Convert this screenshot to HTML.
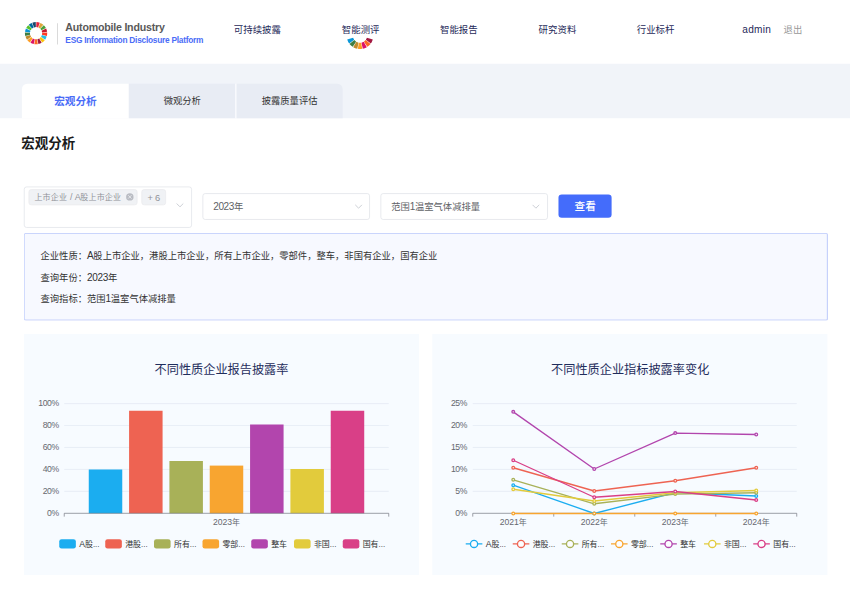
<!DOCTYPE html>
<html lang="zh-CN"><head><meta charset="utf-8"><title>宏观分析</title>
<style>
html,body{margin:0;padding:0;background:#fff;overflow:hidden;width:850px;height:608px}
#stage{position:absolute;left:0;top:0;width:1280px;height:915.58px;transform:scale(0.6640625);transform-origin:0 0;font-family:"Liberation Sans","Noto Sans CJK SC",sans-serif;color:#333;overflow:hidden;background:#fff}
.abs{position:absolute}
.hdr{left:0;top:0;width:1280px;height:96px;background:#fff}
.band{left:0;top:96px;width:1280px;height:81.8px;background:#f1f4f9}
.t1{font-weight:bold;font-size:16px;color:#595959;letter-spacing:-0.32px;white-space:nowrap;line-height:20px}
.t2{font-weight:bold;font-size:12.5px;color:#4a6cf7;letter-spacing:-0.36px;white-space:nowrap;line-height:16px}
.nav{font-size:14.2px;color:#1f2a5a;white-space:nowrap;line-height:20px;top:35.2px}
.tab{top:126.3px;height:51.5px;width:160.4px;background:#e8ecf4;line-height:53px;text-align:center;font-size:14px;color:#333}
.tab.on{background:#fff;color:#4a6cf7;font-weight:bold;font-size:16px;border-radius:8px 0 0 0}
.h1{left:32px;top:200.5px;font-size:20.3px;font-weight:bold;color:#1a1a1a;line-height:30px}
.sel{box-sizing:border-box;border:1px solid #dcdfe6;border-radius:4px;background:#fff;font-size:14px;color:#606266;line-height:38px}
.tag{box-sizing:border-box;height:24px;background:#f0f2f5;border:1px solid #e9e9eb;border-radius:4px;color:#909399;font-size:12px;line-height:22px;white-space:nowrap}
.btn{background:#446cfb;color:#fff;border-radius:5px;font-size:16px;text-align:center;line-height:36.4px;font-weight:500}
.info{box-sizing:border-box;left:35.5px;top:351.2px;width:1211.1px;height:132.2px;border:1px solid #b4c4fb;border-right:2px solid #c6d1fb;border-bottom:2px solid #c6d1fb;background:#f7f9ff;border-radius:3px;font-size:14px;color:#333;line-height:32.5px;padding:17.2px 0 0 24.5px}
.panel{background:#f7fbff;top:502.6px;height:363.3px}
svg text{font-family:"Liberation Sans","Noto Sans CJK SC",sans-serif}
.ax{font-size:12px;fill:#666870}
.ax.d{font-size:13px;letter-spacing:-0.6px}
.ax .d{font-size:13px;letter-spacing:0}
.d{font-size:1.08em;letter-spacing:-0.035em}
.lg{font-size:12px;fill:#333}
.ttl{font-size:18.35px;fill:#1f2d5c}
</style></head><body>
<div id="stage">
<div class="abs hdr"></div>
<svg class="abs" style="left:0;top:0" width="120" height="96" viewBox="0 0 120 96"><path d="M54.77 33.21A16.80 16.80 0 0 1 59.93 34.17L57.38 41.33A9.20 9.20 0 0 0 54.56 40.80Z" fill="#E5243B"/><path d="M60.80 34.51A16.80 16.80 0 0 1 65.27 37.27L60.31 43.03A9.20 9.20 0 0 0 57.86 41.52Z" fill="#DDA63A"/><path d="M65.96 37.91A16.80 16.80 0 0 1 69.12 42.09L62.42 45.67A9.20 9.20 0 0 0 60.69 43.38Z" fill="#4C9F38"/><path d="M69.54 42.93A16.80 16.80 0 0 1 70.98 47.98L63.43 48.90A9.20 9.20 0 0 0 62.65 46.13Z" fill="#C5192D"/><path d="M71.07 48.92A16.80 16.80 0 0 1 70.58 54.14L63.22 52.27A9.20 9.20 0 0 0 63.48 49.41Z" fill="#FF3A21"/><path d="M70.32 55.05A16.80 16.80 0 0 1 67.98 59.75L61.79 55.34A9.20 9.20 0 0 0 63.08 52.76Z" fill="#26BDE2"/><path d="M67.42 60.49A16.80 16.80 0 0 1 63.54 64.03L59.36 57.68A9.20 9.20 0 0 0 61.48 55.75Z" fill="#FCC30B"/><path d="M62.74 64.53A16.80 16.80 0 0 1 57.85 66.42L56.24 58.99A9.20 9.20 0 0 0 58.92 57.95Z" fill="#A21942"/><path d="M56.92 66.59A16.80 16.80 0 0 1 51.68 66.59L52.86 59.09A9.20 9.20 0 0 0 55.74 59.09Z" fill="#FD6925"/><path d="M50.75 66.42A16.80 16.80 0 0 1 45.86 64.53L49.68 57.95A9.20 9.20 0 0 0 52.36 58.99Z" fill="#DD1367"/><path d="M45.06 64.03A16.80 16.80 0 0 1 41.18 60.49L47.12 55.75A9.20 9.20 0 0 0 49.24 57.68Z" fill="#FD9D24"/><path d="M40.62 59.75A16.80 16.80 0 0 1 38.28 55.05L45.52 52.76A9.20 9.20 0 0 0 46.81 55.34Z" fill="#BF8B2E"/><path d="M38.02 54.14A16.80 16.80 0 0 1 37.53 48.92L45.12 49.41A9.20 9.20 0 0 0 45.38 52.27Z" fill="#3F7E44"/><path d="M37.62 47.98A16.80 16.80 0 0 1 39.06 42.93L45.95 46.13A9.20 9.20 0 0 0 45.17 48.90Z" fill="#0A97D9"/><path d="M39.48 42.09A16.80 16.80 0 0 1 42.64 37.91L47.91 43.38A9.20 9.20 0 0 0 46.18 45.67Z" fill="#56C02B"/><path d="M43.33 37.27A16.80 16.80 0 0 1 47.80 34.51L50.74 41.52A9.20 9.20 0 0 0 48.29 43.03Z" fill="#00689D"/><path d="M48.67 34.17A16.80 16.80 0 0 1 53.83 33.21L54.04 40.80A9.20 9.20 0 0 0 51.22 41.33Z" fill="#19486A"/></svg>
<div class="abs" style="left:86px;top:34.5px;width:1px;height:32.5px;background:#c8c8c8"></div>
<div class="abs t1" style="left:98.4px;top:31.7px">Automobile Industry</div>
<div class="abs t2" style="left:98.4px;top:51.5px">ESG Information Disclosure Platform</div>
<div class="abs nav" style="left:352.1px">可持续披露</div>
<div class="abs nav" style="left:514.7px">智能测评</div>
<svg class="abs" style="left:500px;top:40px" width="90" height="50" viewBox="500 40 90 50"><path d="M525.78 65.45A20.18 20.18 0 0 1 522.85 59.59L531.76 56.82A10.84 10.84 0 0 0 533.34 59.97Z" fill="#0A97D9"/><path d="M531.16 70.55A20.18 20.18 0 0 1 526.31 66.15L533.62 60.35A10.84 10.84 0 0 0 536.23 62.71Z" fill="#3F7E44"/><path d="M538.02 73.37A20.18 20.18 0 0 1 531.91 71.01L536.63 62.96A10.84 10.84 0 0 0 539.92 64.23Z" fill="#BF8B2E"/><path d="M545.43 73.51A20.18 20.18 0 0 1 538.88 73.53L540.38 64.31A10.84 10.84 0 0 0 543.90 64.30Z" fill="#FD9D24"/><path d="M552.40 70.97A20.18 20.18 0 0 1 546.30 73.35L544.36 64.22A10.84 10.84 0 0 0 547.64 62.94Z" fill="#DD1367"/><path d="M557.98 66.09A20.18 20.18 0 0 1 553.15 70.51L548.04 62.69A10.84 10.84 0 0 0 550.64 60.31Z" fill="#FD6925"/><path d="M561.41 59.51A20.18 20.18 0 0 1 558.51 65.38L550.92 59.94A10.84 10.84 0 0 0 552.49 56.78Z" fill="#A21942"/></svg>
<div class="abs nav" style="left:662.6px">智能报告</div>
<div class="abs nav" style="left:811.1px">研究资料</div>
<div class="abs nav" style="left:958.9px">行业标杆</div>
<div class="abs nav" style="left:1117.8px;letter-spacing:0.4px;font-size:15.2px">admin</div>
<div class="abs nav" style="left:1180.0px;color:#999;font-size:14px">退出</div>

<div class="abs band"></div>
<div class="abs tab on" style="left:32.8px;width:161.5px">宏观分析</div>
<div class="abs tab" style="left:194.3px">微观分析</div>
<div class="abs tab" style="left:355.9px;border-radius:0 8px 0 0">披露质量评估</div>
<div class="abs" style="left:354.1px;top:126.3px;width:1.5px;height:51.5px;background:#f9fafd"></div>
<div class="abs h1">宏观分析</div>

<div class="abs sel" style="left:35.5px;top:280.5px;width:253.6px;height:62px"></div>
<div class="abs tag" style="left:42.5px;top:285.2px;width:164.5px;padding-left:8.3px;letter-spacing:0.3px;word-spacing:0.6px">上市企业 <span class="d" style="font-size:13.5px">/ A</span>股上市企业</div>
<svg class="abs" style="left:188.5px;top:289.9px" width="13" height="13" viewBox="0 0 13 13"><circle cx="6.5" cy="6.5" r="5.6" fill="#b9bcc3"/><path d="M4.4 4.4l4.2 4.2M8.6 4.4l-4.2 4.2" stroke="#f0f2f5" stroke-width="1.2" stroke-linecap="round"/></svg>
<div class="abs tag" style="left:212.8px;top:285.2px;width:37.4px;text-align:center;font-size:14px;letter-spacing:-0.3px">+ 6</div>
<svg class="abs" style="left:263px;top:303.1px" width="16" height="12" viewBox="0 0 16 12"><path d="M3 3.5l5 5 5-5" fill="none" stroke="#c0c4cc" stroke-width="1.2"/></svg>

<div class="abs sel" style="left:305px;top:291px;width:252.3px;height:40px;padding-left:15px"><span class="d">2023</span>年</div>
<svg class="abs" style="left:531.8px;top:305px" width="16" height="12" viewBox="0 0 16 12"><path d="M3 3.5l5 5 5-5" fill="none" stroke="#c0c4cc" stroke-width="1.2"/></svg>
<div class="abs sel" style="left:573px;top:291px;width:251.8px;height:40px;padding-left:15px">范围<span class="d">1</span>温室气体减排量</div>
<svg class="abs" style="left:798.8px;top:305px" width="16" height="12" viewBox="0 0 16 12"><path d="M3 3.5l5 5 5-5" fill="none" stroke="#c0c4cc" stroke-width="1.2"/></svg>
<div class="abs btn" style="left:841px;top:292.9px;width:80.4px;height:35.1px">查看</div>

<div class="abs info">企业性质：<span class="d">A</span>股上市企业，港股上市企业，所有上市企业，零部件，整车，非国有企业，国有企业<br>查询年份：<span class="d">2023</span>年<br>查询指标：范围<span class="d">1</span>温室气体减排量</div>

<div class="abs panel" style="left:35.5px;width:595.1px"></div>
<div class="abs panel" style="left:651.3px;width:595.2px"></div>
<svg class="abs" style="left:0;top:0" width="1280" height="915.58" viewBox="0 0 1280 915.58">
<line x1="96.75" x2="585.41" y1="739.93" y2="739.93" stroke="#e0e6f1" stroke-width="1"/><line x1="96.75" x2="585.41" y1="706.89" y2="706.89" stroke="#e0e6f1" stroke-width="1"/><line x1="96.75" x2="585.41" y1="673.85" y2="673.85" stroke="#e0e6f1" stroke-width="1"/><line x1="96.75" x2="585.41" y1="640.81" y2="640.81" stroke="#e0e6f1" stroke-width="1"/><line x1="96.75" x2="585.41" y1="607.77" y2="607.77" stroke="#e0e6f1" stroke-width="1"/><text x="88.47" y="776.47" text-anchor="end" class="ax d">0%</text><text x="88.47" y="743.43" text-anchor="end" class="ax d">20%</text><text x="88.47" y="710.39" text-anchor="end" class="ax d">40%</text><text x="88.47" y="677.35" text-anchor="end" class="ax d">60%</text><text x="88.47" y="644.31" text-anchor="end" class="ax d">80%</text><text x="88.47" y="611.27" text-anchor="end" class="ax d">100%</text><rect x="133.65" y="707.01" width="50.45" height="65.96" fill="#1badf0"/><rect x="194.38" y="618.54" width="50.45" height="154.43" fill="#ee6352"/><rect x="255.11" y="694.21" width="50.45" height="78.76" fill="#a8b158"/><rect x="315.84" y="701.14" width="50.45" height="71.83" fill="#f8a530"/><rect x="376.58" y="639.25" width="50.45" height="133.72" fill="#b245ad"/><rect x="437.31" y="706.26" width="50.45" height="66.71" fill="#e2cb3c"/><rect x="498.04" y="618.54" width="50.45" height="154.43" fill="#d93f87"/><path d="M96.75 777.97V772.97H585.41V777.97" fill="none" stroke="#6e7079" stroke-width="1"/><text x="341.08" y="790.27" text-anchor="middle" class="ax"><tspan class="d">2023</tspan>年</text><rect x="89.22" y="812.05" width="25" height="14" rx="3.5" fill="#1badf0"/><text x="119.22" y="823.25" class="lg"><tspan font-size="13">A</tspan>股...</text><rect x="158.49" y="812.05" width="25" height="14" rx="3.5" fill="#ee6352"/><text x="188.49" y="823.25" class="lg">港股...</text><rect x="231.91" y="812.05" width="25" height="14" rx="3.5" fill="#a8b158"/><text x="261.91" y="823.25" class="lg">所有...</text><rect x="304.94" y="812.05" width="25" height="14" rx="3.5" fill="#f8a530"/><text x="334.94" y="823.25" class="lg">零部...</text><rect x="378.35" y="812.05" width="25" height="14" rx="3.5" fill="#b245ad"/><text x="408.35" y="823.25" class="lg">整车</text><rect x="442.73" y="812.05" width="25" height="14" rx="3.5" fill="#e2cb3c"/><text x="472.73" y="823.25" class="lg">非国...</text><rect x="516.14" y="812.05" width="25" height="14" rx="3.5" fill="#d93f87"/><text x="546.14" y="823.25" class="lg">国有...</text><text x="333.55" y="562.77" text-anchor="middle" class="ttl">不同性质企业报告披露率</text>
<line x1="711.91" x2="1199.81" y1="739.93" y2="739.93" stroke="#e0e6f1" stroke-width="1"/><line x1="711.91" x2="1199.81" y1="706.89" y2="706.89" stroke="#e0e6f1" stroke-width="1"/><line x1="711.91" x2="1199.81" y1="673.85" y2="673.85" stroke="#e0e6f1" stroke-width="1"/><line x1="711.91" x2="1199.81" y1="640.81" y2="640.81" stroke="#e0e6f1" stroke-width="1"/><line x1="711.91" x2="1199.81" y1="607.77" y2="607.77" stroke="#e0e6f1" stroke-width="1"/><text x="703.25" y="776.47" text-anchor="end" class="ax d">0%</text><text x="703.25" y="743.43" text-anchor="end" class="ax d">5%</text><text x="703.25" y="710.39" text-anchor="end" class="ax d">10%</text><text x="703.25" y="677.35" text-anchor="end" class="ax d">15%</text><text x="703.25" y="644.31" text-anchor="end" class="ax d">20%</text><text x="703.25" y="611.27" text-anchor="end" class="ax d">25%</text><path d="M711.91 772.97H1199.81M711.91 772.97v5M833.88 772.97v5M955.86 772.97v5M1077.84 772.97v5M1199.81 772.97v5" fill="none" stroke="#6e7079" stroke-width="1"/><text x="772.89" y="790.27" text-anchor="middle" class="ax"><tspan class="d">2021</tspan>年</text><text x="894.87" y="790.27" text-anchor="middle" class="ax"><tspan class="d">2022</tspan>年</text><text x="1016.85" y="790.27" text-anchor="middle" class="ax"><tspan class="d">2023</tspan>年</text><text x="1138.82" y="790.27" text-anchor="middle" class="ax"><tspan class="d">2024</tspan>年</text><polyline points="772.89,730.67 894.87,773.27 1016.85,741.65 1138.82,746.91" fill="none" stroke="#1badf0" stroke-width="2" stroke-linejoin="bevel"/><polyline points="772.89,704.38 894.87,739.39 1016.85,723.95 1138.82,704.38" fill="none" stroke="#ee6352" stroke-width="2" stroke-linejoin="bevel"/><polyline points="772.89,722.49 894.87,758.63 1016.85,743.98 1138.82,741.99" fill="none" stroke="#a8b158" stroke-width="2" stroke-linejoin="bevel"/><polyline points="772.89,773.27 894.87,773.27 1016.85,773.27 1138.82,773.27" fill="none" stroke="#f8a530" stroke-width="2" stroke-linejoin="bevel"/><polyline points="772.89,620.18 894.87,706.24 1016.85,652.13 1138.82,654.33" fill="none" stroke="#b245ad" stroke-width="2" stroke-linejoin="bevel"/><polyline points="772.89,736.73 894.87,754.43 1016.85,741.99 1138.82,738.66" fill="none" stroke="#e2cb3c" stroke-width="2" stroke-linejoin="bevel"/><polyline points="772.89,693.07 894.87,748.78 1016.85,740.12 1138.82,752.97" fill="none" stroke="#d93f87" stroke-width="2" stroke-linejoin="bevel"/><circle cx="772.89" cy="730.67" r="2" fill="#fff" stroke="#1badf0" stroke-width="2"/><circle cx="894.87" cy="773.27" r="2" fill="#fff" stroke="#1badf0" stroke-width="2"/><circle cx="1016.85" cy="741.65" r="2" fill="#fff" stroke="#1badf0" stroke-width="2"/><circle cx="1138.82" cy="746.91" r="2" fill="#fff" stroke="#1badf0" stroke-width="2"/><circle cx="772.89" cy="704.38" r="2" fill="#fff" stroke="#ee6352" stroke-width="2"/><circle cx="894.87" cy="739.39" r="2" fill="#fff" stroke="#ee6352" stroke-width="2"/><circle cx="1016.85" cy="723.95" r="2" fill="#fff" stroke="#ee6352" stroke-width="2"/><circle cx="1138.82" cy="704.38" r="2" fill="#fff" stroke="#ee6352" stroke-width="2"/><circle cx="772.89" cy="722.49" r="2" fill="#fff" stroke="#a8b158" stroke-width="2"/><circle cx="894.87" cy="758.63" r="2" fill="#fff" stroke="#a8b158" stroke-width="2"/><circle cx="1016.85" cy="743.98" r="2" fill="#fff" stroke="#a8b158" stroke-width="2"/><circle cx="1138.82" cy="741.99" r="2" fill="#fff" stroke="#a8b158" stroke-width="2"/><circle cx="772.89" cy="773.27" r="2" fill="#fff" stroke="#f8a530" stroke-width="2"/><circle cx="894.87" cy="773.27" r="2" fill="#fff" stroke="#f8a530" stroke-width="2"/><circle cx="1016.85" cy="773.27" r="2" fill="#fff" stroke="#f8a530" stroke-width="2"/><circle cx="1138.82" cy="773.27" r="2" fill="#fff" stroke="#f8a530" stroke-width="2"/><circle cx="772.89" cy="620.18" r="2" fill="#fff" stroke="#b245ad" stroke-width="2"/><circle cx="894.87" cy="706.24" r="2" fill="#fff" stroke="#b245ad" stroke-width="2"/><circle cx="1016.85" cy="652.13" r="2" fill="#fff" stroke="#b245ad" stroke-width="2"/><circle cx="1138.82" cy="654.33" r="2" fill="#fff" stroke="#b245ad" stroke-width="2"/><circle cx="772.89" cy="736.73" r="2" fill="#fff" stroke="#e2cb3c" stroke-width="2"/><circle cx="894.87" cy="754.43" r="2" fill="#fff" stroke="#e2cb3c" stroke-width="2"/><circle cx="1016.85" cy="741.99" r="2" fill="#fff" stroke="#e2cb3c" stroke-width="2"/><circle cx="1138.82" cy="738.66" r="2" fill="#fff" stroke="#e2cb3c" stroke-width="2"/><circle cx="772.89" cy="693.07" r="2" fill="#fff" stroke="#d93f87" stroke-width="2"/><circle cx="894.87" cy="748.78" r="2" fill="#fff" stroke="#d93f87" stroke-width="2"/><circle cx="1016.85" cy="740.12" r="2" fill="#fff" stroke="#d93f87" stroke-width="2"/><circle cx="1138.82" cy="752.97" r="2" fill="#fff" stroke="#d93f87" stroke-width="2"/><path d="M701.36 819.05h25" stroke="#1badf0" stroke-width="2"/><circle cx="713.86" cy="819.05" r="5.4" fill="#fcfdff" stroke="#1badf0" stroke-width="2"/><text x="731.36" y="823.25" class="lg"><tspan font-size="13">A</tspan>股...</text><path d="M772.14 819.05h25" stroke="#ee6352" stroke-width="2"/><circle cx="784.64" cy="819.05" r="5.4" fill="#fcfdff" stroke="#ee6352" stroke-width="2"/><text x="802.14" y="823.25" class="lg">港股...</text><path d="M845.93 819.05h25" stroke="#a8b158" stroke-width="2"/><circle cx="858.43" cy="819.05" r="5.4" fill="#fcfdff" stroke="#a8b158" stroke-width="2"/><text x="875.93" y="823.25" class="lg">所有...</text><path d="M920.09 819.05h25" stroke="#f8a530" stroke-width="2"/><circle cx="932.59" cy="819.05" r="5.4" fill="#fcfdff" stroke="#f8a530" stroke-width="2"/><text x="950.09" y="823.25" class="lg">零部...</text><path d="M994.26 819.05h25" stroke="#b245ad" stroke-width="2"/><circle cx="1006.76" cy="819.05" r="5.4" fill="#fcfdff" stroke="#b245ad" stroke-width="2"/><text x="1024.26" y="823.25" class="lg">整车</text><path d="M1060.14 819.05h25" stroke="#e2cb3c" stroke-width="2"/><circle cx="1072.64" cy="819.05" r="5.4" fill="#fcfdff" stroke="#e2cb3c" stroke-width="2"/><text x="1090.14" y="823.25" class="lg">非国...</text><path d="M1134.31 819.05h25" stroke="#d93f87" stroke-width="2"/><circle cx="1146.81" cy="819.05" r="5.4" fill="#fcfdff" stroke="#d93f87" stroke-width="2"/><text x="1164.31" y="823.25" class="lg">国有...</text><text x="949.01" y="562.77" text-anchor="middle" class="ttl">不同性质企业指标披露率变化</text>
</svg>
</div>
</body></html>
